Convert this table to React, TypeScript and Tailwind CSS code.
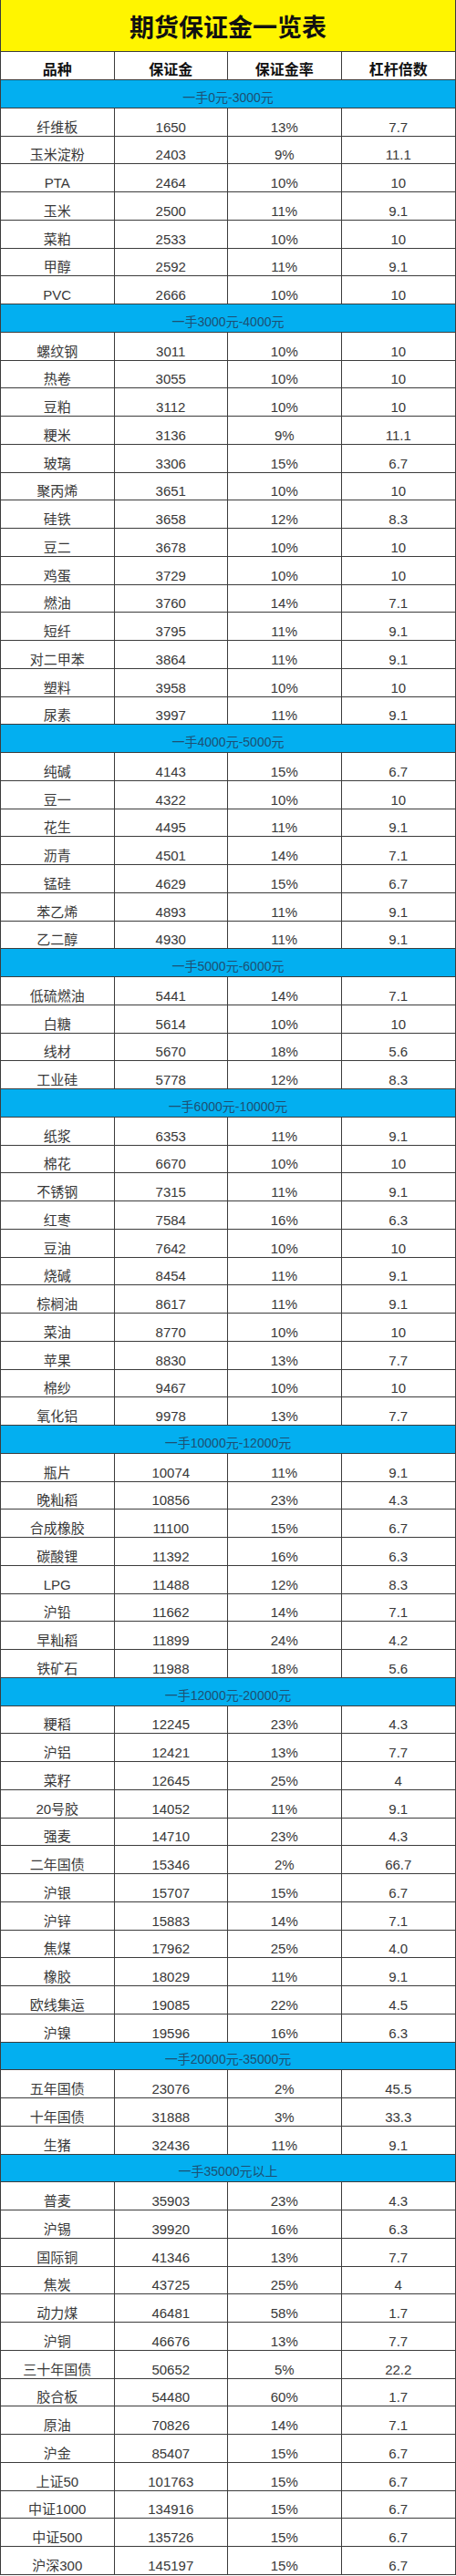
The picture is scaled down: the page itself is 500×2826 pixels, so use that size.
type Row = [string, string, string, string];

type Section = { title: string; rows: Row[] };

const sections: Section[] = [
  {
    title: '一手0元-3000元',
    rows: [
      ['纤维板', '1650', '13%', '7.7'],
      ['玉米淀粉', '2403', '9%', '11.1'],
      ['PTA', '2464', '10%', '10'],
      ['玉米', '2500', '11%', '9.1'],
      ['菜粕', '2533', '10%', '10'],
      ['甲醇', '2592', '11%', '9.1'],
      ['PVC', '2666', '10%', '10'],
    ],
  },
  {
    title: '一手3000元-4000元',
    rows: [
      ['螺纹钢', '3011', '10%', '10'],
      ['热卷', '3055', '10%', '10'],
      ['豆粕', '3112', '10%', '10'],
      ['粳米', '3136', '9%', '11.1'],
      ['玻璃', '3306', '15%', '6.7'],
      ['聚丙烯', '3651', '10%', '10'],
      ['硅铁', '3658', '12%', '8.3'],
      ['豆二', '3678', '10%', '10'],
      ['鸡蛋', '3729', '10%', '10'],
      ['燃油', '3760', '14%', '7.1'],
      ['短纤', '3795', '11%', '9.1'],
      ['对二甲苯', '3864', '11%', '9.1'],
      ['塑料', '3958', '10%', '10'],
      ['尿素', '3997', '11%', '9.1'],
    ],
  },
  {
    title: '一手4000元-5000元',
    rows: [
      ['纯碱', '4143', '15%', '6.7'],
      ['豆一', '4322', '10%', '10'],
      ['花生', '4495', '11%', '9.1'],
      ['沥青', '4501', '14%', '7.1'],
      ['锰硅', '4629', '15%', '6.7'],
      ['苯乙烯', '4893', '11%', '9.1'],
      ['乙二醇', '4930', '11%', '9.1'],
    ],
  },
  {
    title: '一手5000元-6000元',
    rows: [
      ['低硫燃油', '5441', '14%', '7.1'],
      ['白糖', '5614', '10%', '10'],
      ['线材', '5670', '18%', '5.6'],
      ['工业硅', '5778', '12%', '8.3'],
    ],
  },
  {
    title: '一手6000元-10000元',
    rows: [
      ['纸浆', '6353', '11%', '9.1'],
      ['棉花', '6670', '10%', '10'],
      ['不锈钢', '7315', '11%', '9.1'],
      ['红枣', '7584', '16%', '6.3'],
      ['豆油', '7642', '10%', '10'],
      ['烧碱', '8454', '11%', '9.1'],
      ['棕榈油', '8617', '11%', '9.1'],
      ['菜油', '8770', '10%', '10'],
      ['苹果', '8830', '13%', '7.7'],
      ['棉纱', '9467', '10%', '10'],
      ['氧化铝', '9978', '13%', '7.7'],
    ],
  },
  {
    title: '一手10000元-12000元',
    rows: [
      ['瓶片', '10074', '11%', '9.1'],
      ['晚籼稻', '10856', '23%', '4.3'],
      ['合成橡胶', '11100', '15%', '6.7'],
      ['碳酸锂', '11392', '16%', '6.3'],
      ['LPG', '11488', '12%', '8.3'],
      ['沪铅', '11662', '14%', '7.1'],
      ['早籼稻', '11899', '24%', '4.2'],
      ['铁矿石', '11988', '18%', '5.6'],
    ],
  },
  {
    title: '一手12000元-20000元',
    rows: [
      ['粳稻', '12245', '23%', '4.3'],
      ['沪铝', '12421', '13%', '7.7'],
      ['菜籽', '12645', '25%', '4'],
      ['20号胶', '14052', '11%', '9.1'],
      ['强麦', '14710', '23%', '4.3'],
      ['二年国债', '15346', '2%', '66.7'],
      ['沪银', '15707', '15%', '6.7'],
      ['沪锌', '15883', '14%', '7.1'],
      ['焦煤', '17962', '25%', '4.0'],
      ['橡胶', '18029', '11%', '9.1'],
      ['欧线集运', '19085', '22%', '4.5'],
      ['沪镍', '19596', '16%', '6.3'],
    ],
  },
  {
    title: '一手20000元-35000元',
    rows: [
      ['五年国债', '23076', '2%', '45.5'],
      ['十年国债', '31888', '3%', '33.3'],
      ['生猪', '32436', '11%', '9.1'],
    ],
  },
  {
    title: '一手35000元以上',
    rows: [
      ['普麦', '35903', '23%', '4.3'],
      ['沪锡', '39920', '16%', '6.3'],
      ['国际铜', '41346', '13%', '7.7'],
      ['焦炭', '43725', '25%', '4'],
      ['动力煤', '46481', '58%', '1.7'],
      ['沪铜', '46676', '13%', '7.7'],
      ['三十年国债', '50652', '5%', '22.2'],
      ['胶合板', '54480', '60%', '1.7'],
      ['原油', '70826', '14%', '7.1'],
      ['沪金', '85407', '15%', '6.7'],
      ['上证50', '101763', '15%', '6.7'],
      ['中证1000', '134916', '15%', '6.7'],
      ['中证500', '135726', '15%', '6.7'],
      ['沪深300', '145197', '15%', '6.7'],
    ],
  },
];

const font = 'font-["Liberation_Sans","Noto_Sans_CJK_SC",sans-serif]';

function DataRow({ row }: { row: Row }) {
  return (
    <div className="grid grid-cols-4 h-[30.76px] border-b border-[#3c3c3c] bg-white">
      {row.map((cell, i) => (
        <div
          key={i}
          className={`flex items-end justify-center pb-[2px] text-[15px] leading-none text-[#383838] ${
            i < 3 ? 'border-r border-[#3c3c3c]' : ''
          }`}
        >
          {cell}
        </div>
      ))}
    </div>
  );
}

function SectionRow({ title }: { title: string }) {
  return (
    <div className="flex h-[30.76px] items-end justify-center border-b border-[#3c3c3c] bg-[#03aff0] pb-[4px] text-[14px] leading-none text-[#1d4f73]">
      {title}
    </div>
  );
}

export default function App() {
  return (
    <div className={`w-[500px] border-x border-[#3c3c3c] ${font}`}>
      {/* 标题 */}
      <div className="flex h-[57px] items-center justify-center border-b border-[#3c3c3c] bg-[#fff500] pt-[6px] text-[27px] font-bold leading-none text-[#111]">
        期货保证金一览表
      </div>

      {/* 表头 */}
      <div className="grid grid-cols-4 h-[31px] border-b border-[#3c3c3c] bg-white">
        {['品种', '保证金', '保证金率', '杠杆倍数'].map((h, i) => (
          <div
            key={h}
            className={`flex items-end justify-center pb-[2px] text-[16px] font-bold leading-none text-[#111] ${
              i < 3 ? 'border-r border-[#3c3c3c]' : ''
            }`}
          >
            {h}
          </div>
        ))}
      </div>

      {sections.map((s) => (
        <div key={s.title}>
          <SectionRow title={s.title} />
          {s.rows.map((r) => (
            <DataRow key={r[0]} row={r} />
          ))}
        </div>
      ))}
    </div>
  );
}
